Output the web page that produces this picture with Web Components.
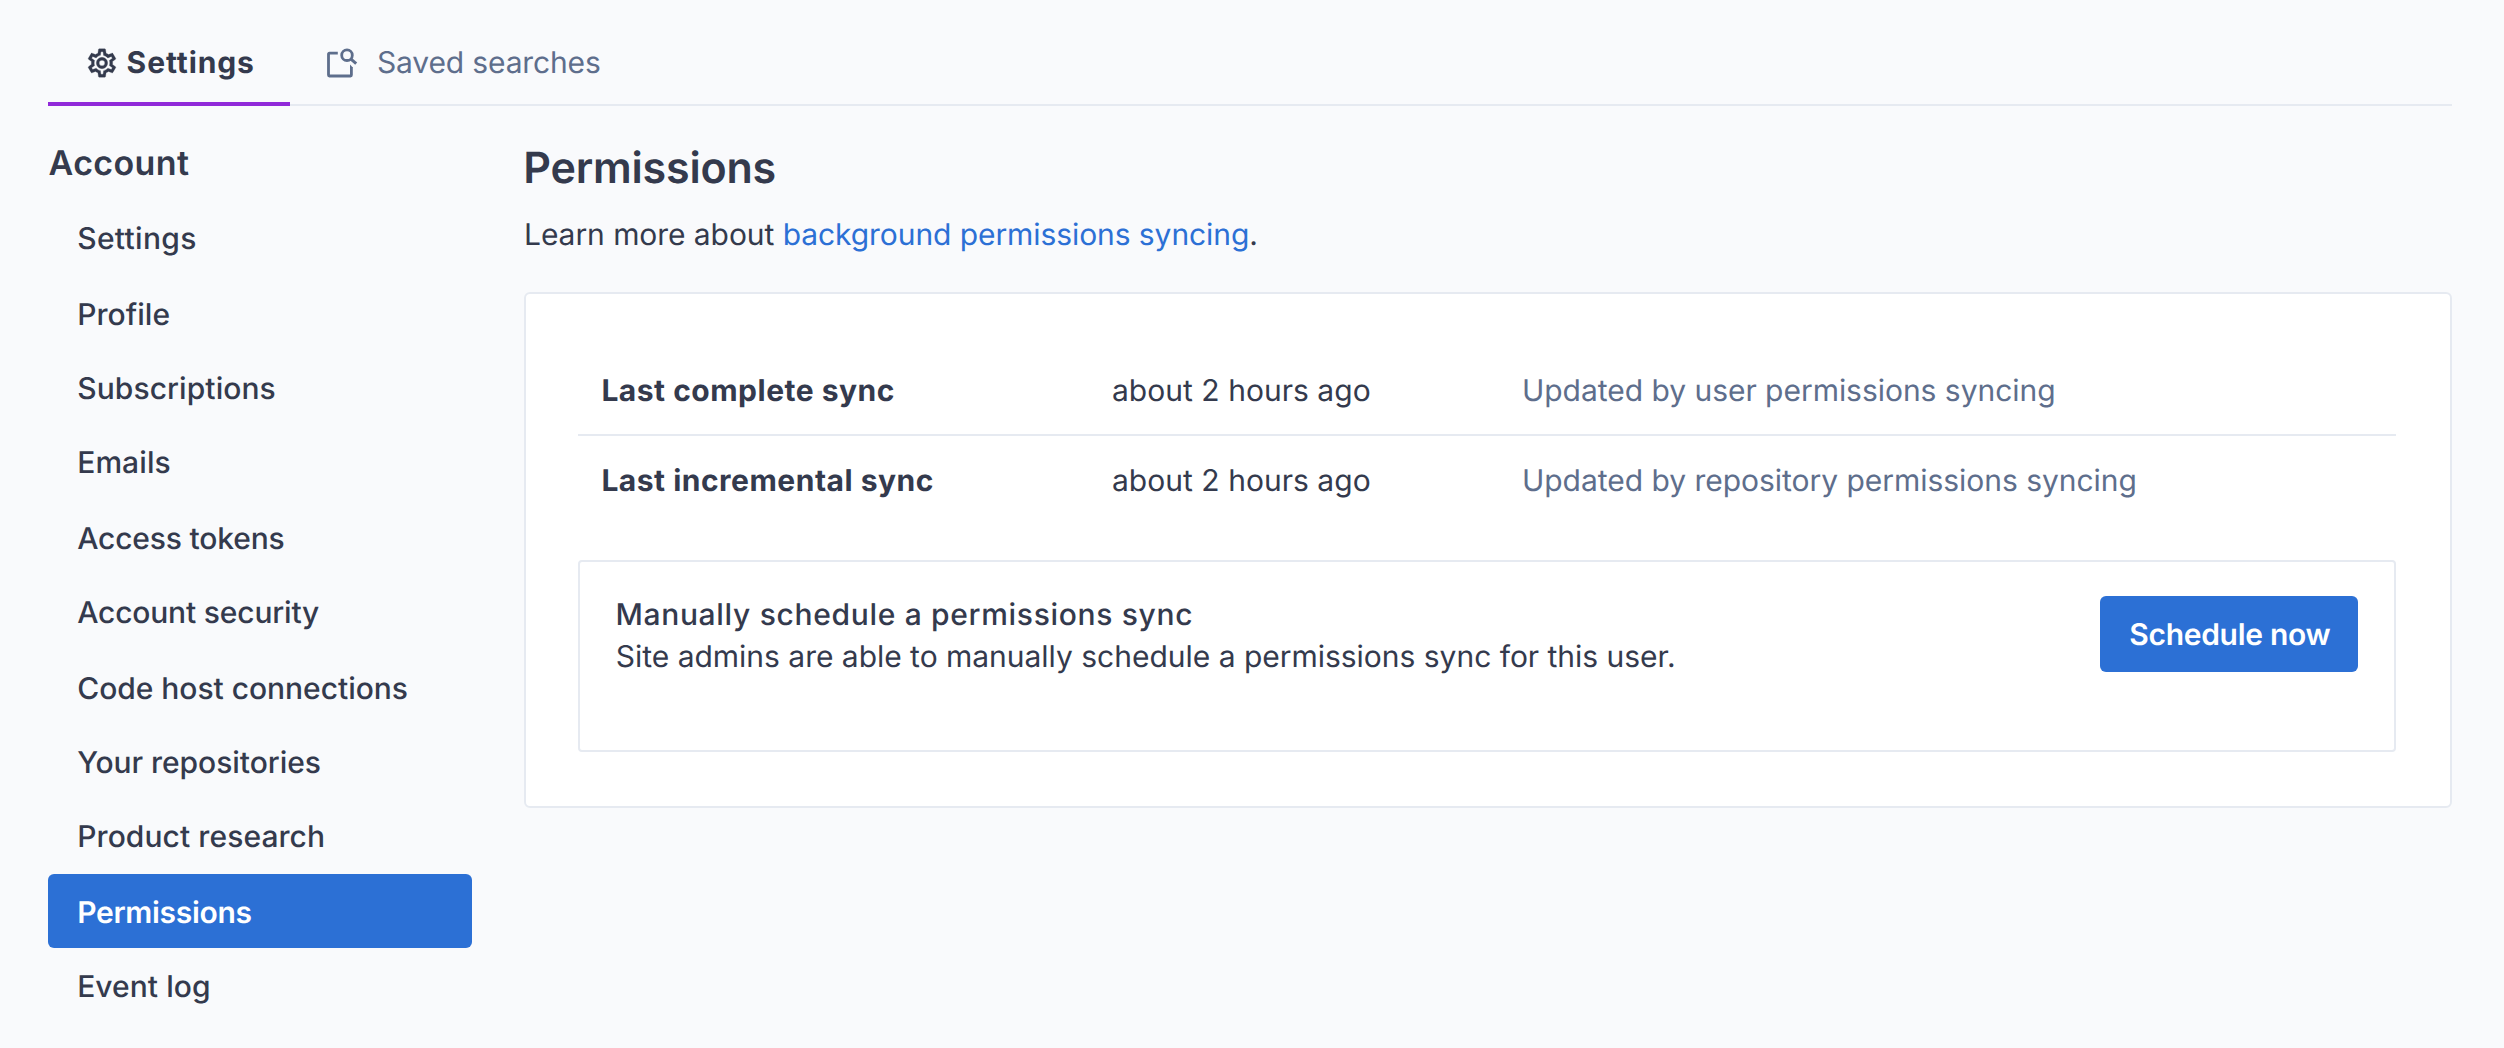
<!DOCTYPE html>
<html lang="en">
<head>
<meta charset="utf-8">
<title>Permissions</title>
<style>
body{margin:0;background:#f9fafc;color:#343a4d;font:400 30px/36px Inter,"Liberation Sans",sans-serif;text-rendering:geometricPrecision;
--muted:#5e6e8c;--border:#e6eaf1;--primary:#2c70d5;--accent:#9129d9}
</style>
</head>
<body>
<settings-page>
  <tab-bar slot="tabs">
    <tab-item active style="letter-spacing:.9px"><gear-icon slot="icon"></gear-icon>Settings</tab-item>
    <tab-item style="letter-spacing:-.15px"><search-note-icon slot="icon"></search-note-icon>Saved searches</tab-item>
  </tab-bar>
  <side-nav slot="side" heading="Account">
    <nav-item style="letter-spacing:.317px">Settings</nav-item>
    <nav-item spaced style="letter-spacing:.052px">Profile</nav-item>
    <nav-item style="letter-spacing:.078px">Subscriptions</nav-item>
    <nav-item style="letter-spacing:.1px">Emails</nav-item>
    <nav-item spaced style="letter-spacing:-.17px">Access tokens</nav-item>
    <nav-item style="letter-spacing:-.18px">Account security</nav-item>
    <nav-item spaced style="letter-spacing:-.031px">Code host connections</nav-item>
    <nav-item style="letter-spacing:-.04px">Your repositories</nav-item>
    <nav-item style="letter-spacing:.08px">Product research</nav-item>
    <nav-item spaced active style="letter-spacing:-.3px">Permissions</nav-item>
    <nav-item style="letter-spacing:.05px">Event log</nav-item>
  </side-nav>
  <page-header heading="Permissions"><span style="letter-spacing:-.063px">Learn more about </span><text-link>background permissions syncing</text-link>.</page-header>
  <settings-card>
    <sync-row><b slot="name">Last complete sync</b><span slot="time">about 2 hours ago</span>Updated by user permissions syncing</sync-row>
    <sync-row last><b slot="name">Last incremental sync</b><span slot="time">about 2 hours ago</span>Updated by repository permissions syncing</sync-row>
    <action-box heading="Manually schedule a permissions sync">Site admins are able to manually schedule a permissions sync for this user.<primary-button slot="action">Schedule now</primary-button></action-box>
  </settings-card>
</settings-page>
<script>
const define = (name, css, html) => customElements.define(name, class extends HTMLElement {
  connectedCallback() {
    if (this.shadowRoot) return;
    const t = document.createElement('template');
    t.innerHTML = `<style>:host{box-sizing:border-box}*{box-sizing:border-box}${css}</style>${html}`;
    this.attachShadow({mode: 'open'}).append(t.content.cloneNode(true));
    const h = this.shadowRoot.querySelector('[data-heading]');
    if (h) h.textContent = this.getAttribute('heading');
  }
});

define('settings-page', `
:host{display:block;min-height:1048px;padding:0 52px 0 48px}
.columns{display:flex;gap:52px}
main{flex:1;min-width:0}`,
`<slot name="tabs"></slot><div class="columns"><slot name="side"></slot><main><slot></slot></main></div>`);

define('tab-bar', `
:host{display:flex;height:106px;gap:36px;box-shadow:inset 0 -2px var(--border)}`, `<slot></slot>`);

define('tab-item', `
:host{display:flex;align-items:flex-start;padding-top:45px;color:var(--muted);white-space:nowrap}
:host([active]){width:242px;padding-left:37px;border-bottom:4px solid var(--accent);color:inherit;font-weight:700}
.label{margin-left:17px}
:host([active]) .label{margin-left:7.6px}`,
`<slot name="icon"></slot><span class="label"><slot></slot></span>`);

define('gear-icon', `:host{display:block;padding-top:1px}svg{display:block}`,
`<svg width="34" height="34" viewBox="0 0 24 24" fill="currentColor" stroke="currentColor" stroke-width=".2"><path d="M12,8A4,4 0 0,1 16,12A4,4 0 0,1 12,16A4,4 0 0,1 8,12A4,4 0 0,1 12,8M12,10A2,2 0 0,0 10,12A2,2 0 0,0 12,14A2,2 0 0,0 14,12A2,2 0 0,0 12,10M10,22C9.75,22 9.54,21.82 9.5,21.58L9.13,18.93C8.5,18.68 7.96,18.34 7.44,17.94L4.95,18.95C4.73,19.03 4.46,18.95 4.34,18.73L2.34,15.27C2.21,15.05 2.27,14.78 2.46,14.63L4.57,12.97L4.5,12L4.57,11L2.46,9.37C2.27,9.22 2.21,8.95 2.34,8.73L4.34,5.27C4.46,5.05 4.73,4.96 4.95,5.05L7.44,6.05C7.96,5.66 8.5,5.32 9.13,5.07L9.5,2.42C9.54,2.18 9.75,2 10,2H14C14.25,2 14.46,2.18 14.5,2.42L14.87,5.07C15.5,5.32 16.04,5.66 16.56,6.05L19.05,5.05C19.27,4.96 19.54,5.05 19.66,5.27L21.66,8.73C21.79,8.95 21.73,9.22 21.54,9.37L19.43,11L19.5,12L19.43,13L21.54,14.63C21.73,14.78 21.79,15.05 21.66,15.27L19.66,18.73C19.54,18.95 19.27,19.04 19.05,18.95L16.56,17.95C16.04,18.34 15.5,18.68 14.87,18.93L14.5,21.58C14.46,21.82 14.25,22 14,22H10M11.25,4L10.88,6.61C9.68,6.86 8.62,7.5 7.85,8.39L5.44,7.35L4.69,8.65L6.8,10.2C6.4,11.37 6.4,12.64 6.8,13.8L4.68,15.36L5.43,16.66L7.86,15.62C8.63,16.5 9.68,17.14 10.87,17.38L11.24,20H12.76L13.13,17.39C14.32,17.14 15.37,16.5 16.14,15.62L18.57,16.66L19.32,15.36L17.2,13.81C17.6,12.64 17.6,11.37 17.2,10.2L19.31,8.65L18.56,7.35L16.15,8.39C15.38,7.5 14.32,6.86 13.12,6.62L12.75,4H11.25Z"/></svg>`);

define('search-note-icon', `:host{display:block;padding-top:3px}svg{display:block}`,
`<svg width="34" height="32" viewBox="0 0 34 32" fill="none" stroke="currentColor">
<path d="M11.8 5.2H3.4Q2.5 5.2 2.5 6.1V27.1Q2.5 28 3.4 28H24.5Q25.4 28 25.4 27.1V19" stroke-width="2.8"/>
<path d="M24 16.6L26.8 19.4H24Z" fill="currentColor" stroke="none"/>
<circle cx="21" cy="7.2" r="5.3" stroke-width="2.8"/>
<path d="M24.7 10.9L30.2 15.7" stroke-width="3"/></svg>`);

define('side-nav', `
:host{display:block;width:424px;flex:none;padding-top:37px}
h3{margin:0 0 16px;padding-left:.6px;font-size:34px;line-height:41px;font-weight:600;letter-spacing:.36px}`,
`<h3 data-heading></h3><nav><slot></slot></nav>`);

define('nav-item', `
:host{display:block;height:74px;padding:4px 0 0 29.2px;line-height:70px;font-weight:500;border-radius:6px;white-space:nowrap}
:host([spaced]){margin-top:2px}
:host([active]){background:var(--primary);color:#fff;font-weight:600}`, `<slot></slot>`);

define('page-header', `
:host{display:block;padding-top:36px;margin-bottom:39px}
h2{margin:0 0 23px -.8px;font-size:43px;line-height:52px;font-weight:600;letter-spacing:-.19px}
p{margin:0}`, `<h2 data-heading></h2><p><slot></slot></p>`);

define('text-link', `:host{display:inline;color:var(--primary);letter-spacing:-.077px}`, `<slot></slot>`);

define('settings-card', `
:host{display:block;height:516px;padding:52px 54px 0 52px;background:#fff;border:2px solid var(--border);border-radius:6px}`, `<slot></slot>`);

define('sync-row', `
:host{display:grid;grid-template-columns:510.6px 410px 1fr;padding:27px 0 25px 23.4px;border-bottom:2px solid var(--border)}
:host([last]){border-bottom:0}
::slotted(b){font-weight:700;letter-spacing:.5px}
::slotted(span){letter-spacing:.03px}
.note{color:var(--muted);letter-spacing:-.03px}`,
`<slot name="name"></slot><slot name="time"></slot><span class="note"><slot></slot></span>`);

define('action-box', `
:host{display:flex;justify-content:space-between;align-items:flex-start;height:192px;margin-top:36px;padding:34px 36px 0 35.4px;border:2px solid var(--border);border-radius:4px}
.text{line-height:42px;margin-top:-2px}
h4{margin:0;font-size:30px;font-weight:500;letter-spacing:.68px}
p{margin:0 0 0 .4px;letter-spacing:-.017px}`,
`<div class="text"><h4 data-heading></h4><p><slot></slot></p></div><slot name="action"></slot>`);

define('primary-button', `
:host{display:block;width:258px;height:76px;padding:2px 0 0 29.3px;line-height:74px;border-radius:6px;background:var(--primary);color:#fff;font-weight:600;letter-spacing:-.3px;white-space:nowrap}`, `<slot></slot>`);
</script>
</body>
</html>
